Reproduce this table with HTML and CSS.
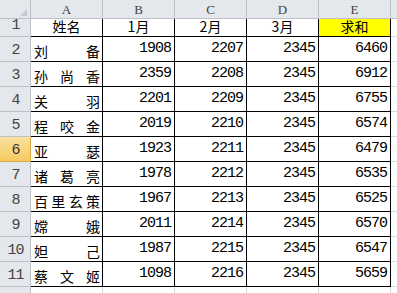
FILE: index.html
```html
<!DOCTYPE html>
<html>
<head>
<meta charset="utf-8">
<link rel="stylesheet" href="styles.css">
</head>
<body>
<div class="sheet">
  <div class="hd corner"><span class="tri"></span></div>
  <div class="hd col">A</div>
  <div class="hd col">B</div>
  <div class="hd col">C</div>
  <div class="hd col">D</div>
  <div class="hd col">E</div>
  <div class="hd col last"></div>

  <div class="hd row">1</div>
  <div class="c cn center">姓名</div>
  <div class="c cn center">1月</div>
  <div class="c cn center">2月</div>
  <div class="c cn center">3月</div>
  <div class="c cn center sum">求和</div>
  <div class="c empty"></div>

  <div class="hd row">2</div>
  <div class="c cn name"><span>刘</span><span>备</span></div>
  <div class="c num">1908</div><div class="c num">2207</div><div class="c num">2345</div><div class="c num">6460</div>
  <div class="c empty"></div>

  <div class="hd row">3</div>
  <div class="c cn name"><span>孙</span><span>尚</span><span>香</span></div>
  <div class="c num">2359</div><div class="c num">2208</div><div class="c num">2345</div><div class="c num">6912</div>
  <div class="c empty"></div>

  <div class="hd row">4</div>
  <div class="c cn name"><span>关</span><span>羽</span></div>
  <div class="c num">2201</div><div class="c num">2209</div><div class="c num">2345</div><div class="c num">6755</div>
  <div class="c empty"></div>

  <div class="hd row">5</div>
  <div class="c cn name"><span>程</span><span>咬</span><span>金</span></div>
  <div class="c num">2019</div><div class="c num">2210</div><div class="c num">2345</div><div class="c num">6574</div>
  <div class="c empty"></div>

  <div class="hd row active">6</div>
  <div class="c cn name"><span>亚</span><span>瑟</span></div>
  <div class="c num">1923</div><div class="c num">2211</div><div class="c num">2345</div><div class="c num">6479</div>
  <div class="c empty"></div>

  <div class="hd row">7</div>
  <div class="c cn name"><span>诸</span><span>葛</span><span>亮</span></div>
  <div class="c num">1978</div><div class="c num">2212</div><div class="c num">2345</div><div class="c num">6535</div>
  <div class="c empty"></div>

  <div class="hd row">8</div>
  <div class="c cn name"><span>百</span><span>里</span><span>玄</span><span>策</span></div>
  <div class="c num">1967</div><div class="c num">2213</div><div class="c num">2345</div><div class="c num">6525</div>
  <div class="c empty"></div>

  <div class="hd row">9</div>
  <div class="c cn name"><span>嫦</span><span>娥</span></div>
  <div class="c num">2011</div><div class="c num">2214</div><div class="c num">2345</div><div class="c num">6570</div>
  <div class="c empty"></div>

  <div class="hd row">10</div>
  <div class="c cn name"><span>妲</span><span>己</span></div>
  <div class="c num">1987</div><div class="c num">2215</div><div class="c num">2345</div><div class="c num">6547</div>
  <div class="c empty"></div>

  <div class="hd row">11</div>
  <div class="c cn name"><span>蔡</span><span>文</span><span>姬</span></div>
  <div class="c num">1098</div><div class="c num">2216</div><div class="c num">2345</div><div class="c num">5659</div>
  <div class="c empty"></div>

  <div class="hd row">12</div>
  <div class="c blank"></div><div class="c blank"></div><div class="c blank"></div><div class="c blank"></div><div class="c blank"></div>
  <div class="c empty"></div>
</div>
</body>
</html>
```
FILE: styles.css
```css
html, body {
  margin: 0;
  padding: 0;
  background: #ffffff;
  overflow: hidden;
}

.sheet {
  display: grid;
  grid-template-columns: 31px repeat(5, 72px) 1fr;
  grid-template-rows: 19px 18px repeat(11, 25px);
  width: 397px;
}

.hd {
  box-sizing: border-box;
  background: #e4e7eb;
  border-right: 1px solid #bcc1c7;
  border-bottom: 1px solid #bcc1c7;
  color: #444;
  display: flex;
  justify-content: center;
}

.corner {
  position: relative;
}

.tri {
  position: absolute;
  right: 3px;
  bottom: 2px;
  width: 0;
  height: 0;
  border-left: 7px solid transparent;
  border-bottom: 7px solid #c3c8ce;
}

.col {
  align-items: center;
  font-family: "Liberation Serif", serif;
  font-size: 13px;
  padding-top: 1px;
}

.col.last {
  border-right: none;
}

.row {
  align-items: flex-end;
  font-family: "Liberation Mono", monospace;
  font-size: 15px;
  letter-spacing: -1px;
  line-height: 14px;
  padding-bottom: 3px;
  padding-left: 1px;
}

.row.active {
  background: linear-gradient(#fbe2a0, #f5c95f);
  border-right-color: #e0a640;
  border-bottom-color: #e0a640;
  color: #333;
}

.c {
  box-sizing: border-box;
  border-right: 1px solid #000;
  border-bottom: 1px solid #000;
  display: flex;
  align-items: flex-end;
  color: #000;
}

.cn {
  font-family: "Noto Sans CJK SC", sans-serif;
  font-size: 14px;
  line-height: 16px;
  padding-bottom: 2px;
}

.center {
  justify-content: center;
}

.name {
  justify-content: space-between;
  padding-left: 3px;
  padding-right: 2px;
}

.sum {
  background: #ffff00;
}

.num {
  justify-content: flex-end;
  font-family: "Liberation Mono", monospace;
  font-size: 15px;
  letter-spacing: -1px;
  line-height: 14px;
  padding-right: 3px;
  padding-bottom: 5px;
}

.empty {
  border-right: none;
  border-bottom: 1px solid #d9d9d9;
}

.blank {
  border-right: 1px solid #d9d9d9;
  border-bottom: 1px solid #d9d9d9;
}
```
